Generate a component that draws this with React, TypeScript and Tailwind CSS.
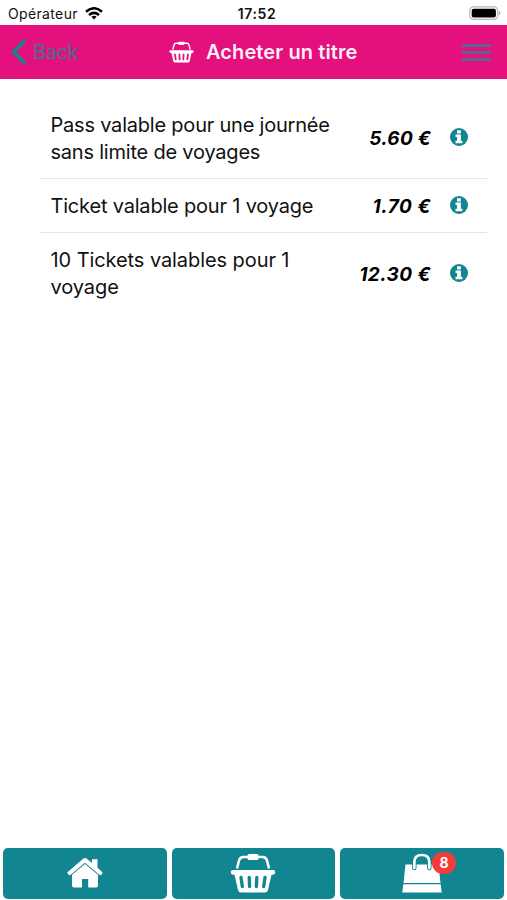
import React from 'react';

type Item = { lines: string[]; price: string; height: string; tracking: string; priceTracking: string };

const items: Item[] = [
  { lines: ['Pass valable pour une journée', 'sans limite de voyages'], price: '5.60 €', height: 'h-[81px]', tracking: 'tracking-[-0.21px]', priceTracking: 'tracking-[0.25px]' },
  { lines: ['Ticket valable pour 1 voyage'], price: '1.70 €', height: 'h-[54px]', tracking: 'tracking-[-0.19px]', priceTracking: 'tracking-[0.55px]' },
  { lines: ['10 Tickets valables pour 1', 'voyage'], price: '12.30 €', height: 'h-[81px]', tracking: 'tracking-[-0.08px]', priceTracking: 'tracking-[0.45px]' },
];

function Basket({ className, slot }: { className: string; slot: string }) {
  return (
    <svg viewBox="0 0 46 40" className={className} fill="none">
      <path d="M7 15.500 L9 7.500 Q10 4 13.500 4 H32.500 Q36 4 37 7.500 L39 15.500" stroke="white" strokeWidth="2.600" />
      <rect x="17.500" y="1" width="11" height="6" rx="1.500" fill="white" />
      <path d="M3 17 H43 Q45.300 17 45.300 19.300 Q45.300 21.700 43 21.700 H41.500 L38 37 Q37.400 39.500 34.800 39.500 H11.200 Q8.600 39.500 8 37 L4.500 21.700 H3 Q.7 21.700 .7 19.300 Q.7 17 3 17Z" fill="white" />
      <path d="M11 24.500 L12.300 33.500 M19.200 24.500 L19.600 33.500 M26.800 24.500 L26.400 33.500 M35 24.500 L33.700 33.500" stroke={slot} strokeWidth="3.300" strokeLinecap="round" />
    </svg>
  );
}

function House() {
  return (
    <svg viewBox="0 0 36 30" className="h-[30px] w-[36px]" fill="white">
      <path d="M25 1.200 H30.500 V9.800 L35.200 14 Q36 15 35 16 L34.400 16.700 Q33.400 17.600 32.400 16.700 L18 4.700 L3.600 16.700 Q2.600 17.600 1.600 16.700 L1 16 Q0 15 .8 14 L15.800 .9 Q18 -.8 20.200 .9 L25 5Z" />
      <path d="M18 6 L31 16.800 V27.500 Q31 29.500 29 29.500 H21.200 V21 H15 V29.500 H7 Q5 29.500 5 27.500 V16.800Z" />
    </svg>
  );
}

function Bag() {
  return (
    <svg viewBox="0 0 40 40" className="h-10 w-10" fill="none">
      <path d="M3.500 11.500 H36.500 L38.500 30 H1.500Z M1.300 31.200 H38.700 L39.700 39.500 H.3Z" fill="white" />
      <path d="M12.300 15 V9 Q12.300 2 19.800 2 Q27.300 2 27.300 9 V15" stroke="#118691" strokeWidth="4.500" strokeLinecap="round" />
      <path d="M12.300 15 V9 Q12.300 2 19.800 2 Q27.300 2 27.300 9 V15" stroke="white" strokeWidth="2.700" strokeLinecap="round" />
    </svg>
  );
}

function Info() {
  return (
    <svg viewBox="0 0 18 18" className="h-[18px] w-[18px]">
      <circle cx="9" cy="9" r="9" fill="#118691" />
      <path d="M7 2.300 H10.800 V5.400 H7Z M5.500 6.500 H10.900 V12.700 H12.400 V15.200 H5.500 V12.700 H7 V9 H5.500Z" fill="white" />
    </svg>
  );
}

export default function App() {
  return (
    <div className="flex h-[900px] w-[507px] flex-col overflow-hidden bg-white font-['Inter','Liberation_Sans',sans-serif] text-[#111]">
      <div className="grid h-[25px] shrink-0 grid-cols-3 items-center">
        <div className="flex items-center gap-[7px] pl-2 pt-[3px]">
          <span className="whitespace-nowrap text-[14px] leading-[20px] tracking-[0.35px]">Opérateur</span>
          <svg viewBox="0 0 18 13" className="mb-[2px] h-[13px] w-[18px]" fill="none" stroke="black" strokeWidth="2.500">
            <path d="M1 4.700 Q9 -2.200 17 4.700" />
            <path d="M4 8 Q9 3.800 14 8" />
            <path d="M6.400 9.800 Q9 7.800 11.600 9.800 L9 12.500Z" fill="black" stroke="none" />
          </svg>
        </div>
        <span className="pl-[7px] pt-[3px] text-center text-[14px] font-semibold leading-[20px] tracking-[0.6px]">17:52</span>
        <div className="flex items-center justify-end pr-[6px] pt-px">
          <svg viewBox="0 0 32 14" className="h-[14px] w-[32px]">
            <rect x=".8" y=".8" width="28" height="12.600" rx="4" fill="white" stroke="#b7b7b7" strokeWidth="1.200" />
            <rect x="2.700" y="2.700" width="24.200" height="8.800" rx="2" fill="black" />
            <path d="M30 5 Q32.500 7 30 9Z" fill="#999" />
          </svg>
        </div>
      </div>

      <header className="flex h-[54px] shrink-0 items-center bg-[#e4107e]">
        <div className="flex w-[169px] items-center pl-[11px] text-[#5b6493]">
          <svg viewBox="0 0 16 26" className="h-[26px] w-4" fill="none" stroke="#118691" strokeWidth="3.500">
            <path d="M14 1.500 L2.500 13 L14 24.500" />
          </svg>
          <span className="pl-[6px] text-[20px] leading-6 tracking-[-0.4px] [-webkit-text-stroke:0.3px_#5b6493]">Back</span>
        </div>
        <Basket className="h-[22px] w-[25px]" slot="#e4107e" />
        <h1 className="flex-1 whitespace-nowrap pl-3 text-[20px] font-semibold leading-6 tracking-[0.1px] text-white/95">Acheter un titre</h1>
        <div className="mr-4 flex w-[29px] flex-col gap-[4px] pt-px">
          <span className="h-[3px] bg-[#5b6493]" />
          <span className="h-[3px] bg-[#5b6493]" />
          <span className="h-[3px] bg-[#5b6493]" />
        </div>
      </header>

      <main className="flex flex-1 flex-col pl-10 pr-5 pt-[19px]">
        {items.map((item, i) => (
          <div
            key={item.price}
            className={`flex items-center pl-[10.5px] pr-[19px] ${item.height} ${i < 2 ? 'border-b border-[#e6e6e6]' : ''}`}
          >
            <div className={`flex-1 whitespace-nowrap pt-px text-[20px] leading-[27px] ${item.tracking}`}>
              {item.lines.map((line) => (
                <p key={line}>{line}</p>
              ))}
            </div>
            <span className={`whitespace-nowrap pt-px text-[19px] font-bold italic leading-[27px] text-black ${item.priceTracking}`}>{item.price}</span>
            <span className="pb-[2px] pl-[19px]">
              <Info />
            </span>
          </div>
        ))}
      </main>

      <nav className="grid h-[53px] shrink-0 grid-cols-3 gap-[5px] px-[3px] pb-px pt-[0.5px]">
        <button className="flex items-center justify-center rounded-[5px] bg-[#118691]">
          <House />
        </button>
        <button className="flex items-center justify-center rounded-[5px] bg-[#118691]">
          <Basket className="h-[40px] w-[46px]" slot="#118691" />
        </button>
        <button className="flex items-center justify-center rounded-[5px] bg-[#118691]">
          <span className="relative">
            <Bag />
            <span className="absolute left-[30px] top-[-1px] flex h-[22px] w-6 items-center justify-center rounded-full bg-[#f43b3c] text-[14px] font-bold leading-none text-white">
              8
            </span>
          </span>
        </button>
      </nav>
    </div>
  );
}
